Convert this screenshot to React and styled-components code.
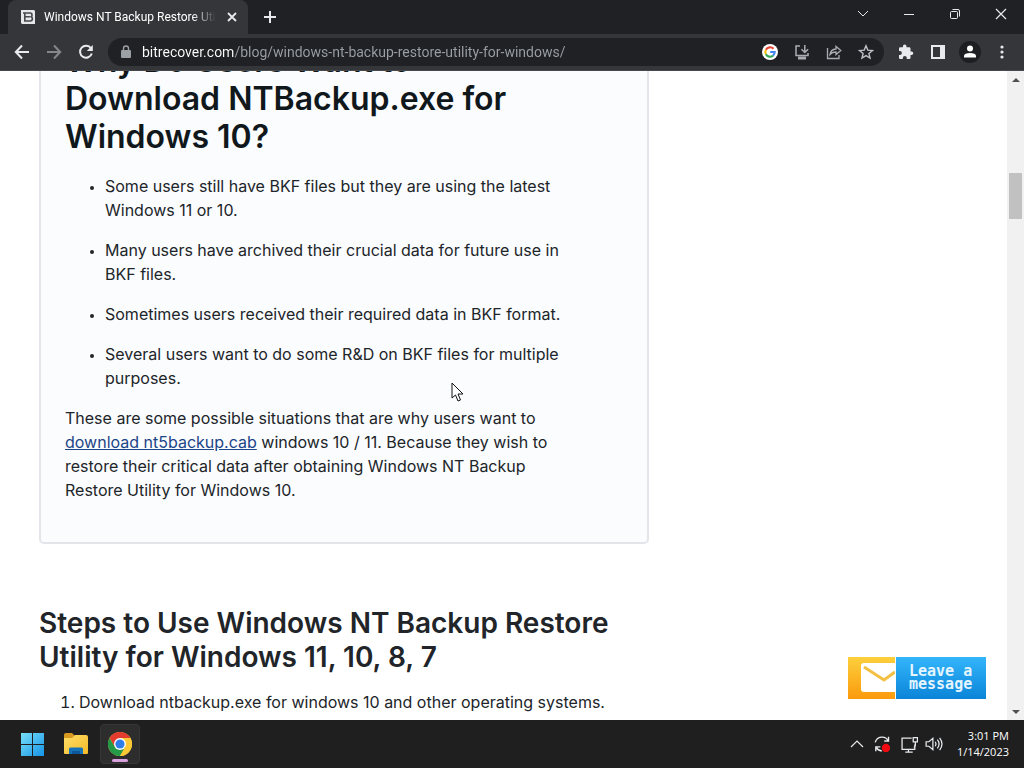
import React from 'react';
import styled, { createGlobalStyle } from 'styled-components';

const ui = 'Roboto, "Open Sans", sans-serif';
const body = 'Inter, "Liberation Sans", sans-serif';

const Global = createGlobalStyle`
  *, *::before, *::after { box-sizing: border-box; }
  body { margin: 0; background: #fff; }
  button, input { font: inherit; color: inherit; border: 0; margin: 0; padding: 0; background: none; }
  svg { display: block; flex: none; }
`;

const Screen = styled.div`
  position: relative;
  display: flex;
  flex-direction: column;
  height: 100vh;
  overflow: hidden;
`;

const TabStrip = styled.div`
  display: flex;
  flex: none;
  height: 34px;
  padding-left: 8px;
  background: #202124;
  color: #fff;
  font-family: ${ui};
`;

const Tab = styled.div`
  display: flex;
  align-items: center;
  gap: 8px;
  width: 240px;
  padding: 0 8px 0 12px;
  border-radius: 8px 8px 0 0;
  background: #35363a;
`;

const TabTitle = styled.span`
  flex: 1;
  overflow: hidden;
  white-space: nowrap;
  font-size: 12px;
  line-height: 16px;
  mask-image: linear-gradient(90deg, #000 86%, transparent);
`;

const IconButton = styled.button`
  display: flex;
  flex: none;
  align-items: center;
  justify-content: center;
  width: ${(p) => p.$w || 32}px;
  height: ${(p) => p.$h || 28}px;
  color: ${(p) => p.$color || '#e8eaed'};
`;

const WindowControls = styled.div`
  display: flex;
  margin-left: auto;
`;

const Toolbar = styled.div`
  display: flex;
  flex: none;
  align-items: center;
  height: 37px;
  padding: 0 6px;
  background: #35363a;
  border-bottom: 1px solid #47484b;
`;

const Omnibox = styled.form`
  display: flex;
  flex: 1;
  align-items: center;
  height: 28px;
  margin: 0 6px;
  padding: 0 2px 0 12px;
  border-radius: 14px;
  background: #202124;
`;

const Address = styled.input`
  flex: 1;
  min-width: 0;
  height: 24px;
  margin-left: 10px;
  font-family: ${ui};
  font-size: 14px;
  outline: none;
  background: linear-gradient(90deg, #fff 92px, #9aa0a6 92px);
  background-clip: text;
  color: transparent;
`;

const Viewport = styled.div`
  position: relative;
  display: flex;
  flex: 1;
  min-height: 0;
  background: #fff;
`;

const Page = styled.main`
  flex: 1;
  min-width: 0;
  overflow: hidden;
  padding-left: 39px;
  color: #212529;
  font-family: ${body};
  font-size: 16px;
  line-height: 24px;
`;

const Article = styled.article`
  max-width: 610px;
  margin-top: -55px;
`;

const Card = styled.section`
  padding: 24px 82px 24px 24px;
  border: 2px solid #e2e6ea;
  border-radius: 5px;
  background: #fafcfe;
`;

const CardTitle = styled.h2`
  margin: 0 0 18px;
  color: #10181c;
  font-size: 32px;
  font-weight: 600;
  line-height: 38px;
`;

const SectionTitle = styled.h3`
  margin: 62px 0 16px;
  font-size: 28px;
  font-weight: 600;
  line-height: 34px;
`;

const Bullets = styled.ul`
  margin: 0 0 16px;
  padding-left: 40px;
  li + li { margin-top: 16px; }
  li::marker { font-size: 12px; }
`;

const Steps = styled.ol`
  margin: 0;
  padding-left: 40px;
`;

const Paragraph = styled.p`
  margin: 0 0 16px;
`;

const Link = styled.a`
  color: #1c4587;
  text-decoration: underline;
`;

const Scrollbar = styled.div`
  display: flex;
  flex-direction: column;
  width: 17px;
  background: #f1f1f1;
`;

const Track = styled.div`
  flex: 1;
  padding: 85px 2px 0;
`;

const Thumb = styled.div`
  height: 46px;
  background: #c1c1c1;
`;

const ChatButton = styled.button`
  position: absolute;
  right: 38px;
  bottom: 21px;
  display: flex;
  height: 42px;
`;

const ChatLabel = styled.span`
  display: flex;
  align-items: center;
  width: 90px;
  height: 42px;
  padding-left: 13px;
  background: linear-gradient(#33b5fb, #0b84d8);
  color: #e4f5ff;
  font-family: "DejaVu Sans Mono", monospace;
  font-size: 15px;
  font-weight: 700;
  line-height: 13px;
  text-align: left;
`;

const Pointer = styled.svg`
  position: absolute;
  left: 451px;
  top: 382px;
`;

const Taskbar = styled.footer`
  display: flex;
  flex: none;
  align-items: center;
  height: 48px;
  padding: 0 15px 0 12px;
  background: #1f1f1f;
  color: #fff;
  font-family: ${ui};
`;

const AppButton = styled.button`
  display: flex;
  flex-direction: column;
  align-items: center;
  justify-content: center;
  width: 40px;
  height: 40px;
  margin-right: 4px;
  border: 1px solid ${(p) => (p.$active ? '#363636' : 'transparent')};
  border-radius: 4px;
  background: ${(p) => (p.$active ? '#2d2d2d' : 'transparent')};
`;

const ActiveMark = styled.span`
  width: 16px;
  height: 3px;
  margin: 3px 0 -6px;
  border-radius: 2px;
  background: #d8a0dc;
`;

const Tray = styled.div`
  display: flex;
  align-items: center;
  margin-left: auto;
`;

const Clock = styled.time`
  width: 64px;
  font-family: "Open Sans", sans-serif;
  font-size: 11px;
  line-height: 16px;
  text-align: right;
`;

const Icon = ({ s = 16, children, ...rest }) => (
  <svg width={s} height={s} viewBox="0 0 16 16" fill="none" stroke="currentColor" strokeWidth="1.5" aria-hidden="true" {...rest}>
    {children}
  </svg>
);

const Favicon = () => (
  <Icon stroke="none">
    <path d="M1 1h13l1 1v13H2l-1-1z" fill="#e4e6e8" />
    <path d="M3 4h7.200q1.800 0 1.800 2 0 1.300-.8 1.800 1.200.6 1.200 2 0 2.200-2.200 2.200H4.800V4M4.800 7.800h5" stroke="#45484c" strokeWidth="1.600" fill="none" />
  </Icon>
);

const GoogleIcon = () => (
  <Icon stroke="none">
    <circle cx="8" cy="8" r="8" fill="#fff" />
    <g fill="none" strokeWidth="2.1">
      <path d="M11.5 4.8A4.7 4.7 0 0 0 3.9 5.8" stroke="#ea4335" />
      <path d="M3.9 5.8a4.7 4.7 0 0 0 0 4.5" stroke="#fbbc04" />
      <path d="M3.9 10.3a4.7 4.7 0 0 0 7.1 1.3" stroke="#34a853" />
      <path d="M11 11.6A4.7 4.7 0 0 0 12.7 8H8.2" stroke="#4285f4" />
    </g>
  </Icon>
);

const WindowsLogo = () => (
  <svg width="24" height="24" viewBox="0 0 24 24" aria-hidden="true">
    <defs>
      <linearGradient id="win" gradientUnits="userSpaceOnUse" x1="0" y1="0" x2="24" y2="24">
        <stop stopColor="#7de3fb" /><stop offset="1" stopColor="#1593e6" />
      </linearGradient>
    </defs>
    <path d="M1 1h11v11H1zM13 1h11v11H13zM1 13h11v11H1zM13 13h11v11H13z" fill="url(#win)" />
  </svg>
);

const FolderIcon = () => (
  <svg width="26" height="24" viewBox="0 0 26 24" aria-hidden="true">
    <defs>
      <linearGradient id="fold" x1="0" y1="0" x2="1" y2="1">
        <stop stopColor="#ffdf68" /><stop offset="1" stopColor="#f5b927" />
      </linearGradient>
    </defs>
    <path d="M1 3q0-2 2-2h6l3 3v5H1z" fill="#d99a20" />
    <path d="M1 6h8l3-3h11q2 0 2 2v16q0 1-1 1H2q-1 0-1-1z" fill="url(#fold)" />
    <path d="M6 22v-5q0-1.500 1.500-1.500h11q1.500 0 1.500 1.500v5z" fill="#1673b8" />
    <path d="M9 19h8v3H9z" fill="#0e579b" />
  </svg>
);

const ChromeIcon = () => (
  <svg width="24" height="24" viewBox="0 0 24 24" aria-hidden="true">
    <circle cx="12" cy="12" r="12" fill="#fcc934" />
    <path d="M1.600 6A12 12 0 0 1 22.400 6H12L6.800 15z" fill="#e33b2e" />
    <path d="M1.600 6A12 12 0 0 0 12 24L17.200 15 12 12 6.800 15z" fill="#249a49" />
    <path d="M22.400 6A12 12 0 0 1 12 24L17.200 15 12 6z" fill="#fcc934" />
    <circle cx="12" cy="12" r="6" fill="#fff" />
    <circle cx="12" cy="12" r="4.600" fill="#2f7de9" />
  </svg>
);

const Envelope = () => (
  <svg width="48" height="42" viewBox="0 0 48 42" aria-hidden="true">
    <defs>
      <linearGradient id="mail" x1="0" y1="0" x2="0" y2="1">
        <stop stopColor="#fcd03c" /><stop offset="1" stopColor="#fb9a0d" />
      </linearGradient>
    </defs>
    <path d="M0 0h47v42H0z" fill="url(#mail)" />
    <path d="M16 6h31v29H16q-3 0-3-3V9q0-3 3-3z" fill="#fff" />
    <path d="M16 10l20 13 11-8" fill="none" stroke="#f3c044" strokeWidth="3" />
    <path d="M47 0h1v42h-1z" fill="#fff" />
  </svg>
);

const points = [
  'Some users still have BKF files but they are using the latest Windows 11 or 10.',
  'Many users have archived their crucial data for future use in BKF files.',
  'Sometimes users received their required data in BKF format.',
  'Several users want to do some R&D on BKF files for multiple purposes.',
];

export default function App() {
  return (
    <Screen>
      <Global />
      <TabStrip>
        <Tab>
          <Favicon />
          <TabTitle>Windows NT Backup Restore Utility</TabTitle>
          <IconButton $w={16} $h={16} aria-label="Close tab">
            <Icon><path d="M4 4l8 8M12 4l-8 8" strokeWidth="1.800" /></Icon>
          </IconButton>
        </Tab>
        <IconButton $w={44} $h={34} aria-label="New tab">
          <Icon><path d="M8 2v12M2 8h12" strokeWidth="2" /></Icon>
        </IconButton>
        <WindowControls>
          <IconButton $w={46} aria-label="Search tabs">
            <Icon><path d="M3 5l5 5 5-5" strokeWidth="1" /></Icon>
          </IconButton>
          <IconButton $w={46} aria-label="Minimize">
            <Icon><path d="M3 8.500h10" strokeWidth="1" /></Icon>
          </IconButton>
          <IconButton $w={46} aria-label="Restore">
            <Icon strokeWidth="1">
              <rect x="3.500" y="5.500" width="7" height="7" rx="1" />
              <path d="M5.500 3.500H11q1.500 0 1.500 1.500v5.500" />
            </Icon>
          </IconButton>
          <IconButton $w={46} aria-label="Close window">
            <Icon><path d="M3 3l10 10M13 3L3 13" strokeWidth="1.200" /></Icon>
          </IconButton>
        </WindowControls>
      </TabStrip>

      <Toolbar>
        <IconButton aria-label="Back">
          <Icon strokeWidth="2"><path d="M15 8H2M8 1.500L1.800 8 8 14.500" /></Icon>
        </IconButton>
        <IconButton $color="#85878b" aria-label="Forward">
          <Icon strokeWidth="2"><path d="M1 8h13M8 1.500L14.200 8 8 14.500" /></Icon>
        </IconButton>
        <IconButton aria-label="Reload">
          <Icon strokeWidth="2">
            <path d="M13 4.300A6 6 0 1 0 13.800 9.500" />
            <path d="M14.800 1v6h-6z" fill="currentColor" stroke="none" />
          </Icon>
        </IconButton>
        <Omnibox onSubmit={(e) => e.preventDefault()}>
          <svg width="12" height="16" viewBox="0 0 12 16" fill="#9aa0a6" aria-hidden="true">
            <path d="M2 6h8q1 0 1 1v6q0 1-1 1H2q-1 0-1-1V7q0-1 1-1z" />
            <path d="M3.500 6V4.500a2.500 2.500 0 0 1 5 0V6" fill="none" stroke="#9aa0a6" strokeWidth="1.400" />
          </svg>
          <Address aria-label="Address" defaultValue="bitrecover.com/blog/windows-nt-backup-restore-utility-for-windows/" />
          <IconButton type="button" aria-label="Search with Google"><GoogleIcon /></IconButton>
          <IconButton type="button" $color="#a9adb2" aria-label="Install app">
            <Icon>
              <path d="M6 2H2v9.500h12V9" />
              <path d="M4 14h8" strokeWidth="3" />
              <path d="M10.800 1v7M7.500 5.200l3.300 3.300 3.300-3.300" />
            </Icon>
          </IconButton>
          <IconButton type="button" $color="#a9adb2" aria-label="Share">
            <Icon strokeWidth="1.300">
              <path d="M1.500 4v10.500h11.500V11" />
              <path d="M4 10.500q.5-5 6-5.500V2.500L14.800 6.500 10 10.500V8Q6 8 4 10.500z" />
            </Icon>
          </IconButton>
          <IconButton type="button" $color="#bdc1c6" aria-label="Bookmark this page">
            <Icon strokeWidth="1.400">
              <path d="M8 1.800l1.800 4.300 4.700.4-3.600 3 1.100 4.600L8 11.600l-4 2.500 1.100-4.600-3.600-3 4.700-.4z" />
            </Icon>
          </IconButton>
        </Omnibox>
        <IconButton aria-label="Extensions">
          <Icon stroke="none" fill="currentColor">
            <path d="M13.500 7.500h-1V4.500q0-1.300-1.300-1.300H8.500V2.400a1.800 1.800 0 0 0-3.600 0v.8H2.200Q1 3.200 1 4.500v2.600h.9a2 2 0 0 1 0 4H1v2.700Q1 15 2.200 15h2.600v-1a2 2 0 0 1 4 0v1h2.400q1.300 0 1.300-1.200v-2.700h1a1.800 1.800 0 0 0 0-3.600z" />
          </Icon>
        </IconButton>
        <IconButton aria-label="Side panel">
          <Icon strokeWidth="2">
            <rect x="2" y="2" width="12" height="12" />
            <path d="M11 2h3v12h-3z" fill="currentColor" />
          </Icon>
        </IconButton>
        <IconButton $color="#fff" aria-label="Profile">
          <svg width="22" height="22" viewBox="0 0 22 22" fill="currentColor" aria-hidden="true">
            <circle cx="11" cy="11" r="11" fill="#1d1e21" />
            <circle cx="11" cy="7.500" r="3" />
            <path d="M5 16.500v-1.700Q5.500 12 11 12t6 2.800v1.700z" />
          </svg>
        </IconButton>
        <IconButton aria-label="Menu">
          <Icon stroke="none" fill="currentColor">
            <circle cx="8" cy="3" r="1.600" /><circle cx="8" cy="8" r="1.600" /><circle cx="8" cy="13" r="1.600" />
          </Icon>
        </IconButton>
      </Toolbar>

      <Viewport>
        <Page>
          <Article>
            <Card>
              <CardTitle>Why Do Users Want to Download NTBackup.exe for Windows 10?</CardTitle>
              <Bullets>
                {points.map((t) => <li key={t}>{t}</li>)}
              </Bullets>
              <Paragraph>
                These are some possible situations that are why users want to{' '}
                <Link href="#download">download nt5backup.cab</Link> windows 10 / 11. Because they wish to
                restore their critical data after obtaining Windows NT Backup Restore Utility for Windows 10.
              </Paragraph>
            </Card>
            <SectionTitle>Steps to Use Windows NT Backup Restore Utility for Windows 11, 10, 8, 7</SectionTitle>
            <Steps>
              <li>Download ntbackup.exe for windows 10 and other operating systems.</li>
            </Steps>
          </Article>
        </Page>
        <Scrollbar>
          <IconButton $w={17} $h={17} $color="#505050" aria-label="Scroll up">
            <Icon stroke="none" fill="currentColor"><path d="M4 10l4-4 4 4z" /></Icon>
          </IconButton>
          <Track><Thumb /></Track>
          <IconButton $w={17} $h={17} $color="#505050" aria-label="Scroll down">
            <Icon stroke="none" fill="currentColor"><path d="M4 6l4 4 4-4z" /></Icon>
          </IconButton>
        </Scrollbar>
        <ChatButton>
          <Envelope />
          <ChatLabel>Leave a message</ChatLabel>
        </ChatButton>
      </Viewport>

      <Taskbar>
        <AppButton aria-label="Start"><WindowsLogo /></AppButton>
        <AppButton aria-label="File Explorer"><FolderIcon /></AppButton>
        <AppButton $active aria-label="Google Chrome">
          <ChromeIcon />
          <ActiveMark />
        </AppButton>
        <Tray>
          <IconButton $w={24} aria-label="Show hidden icons">
            <Icon strokeWidth="1.200"><path d="M2 11l6-6 6 6" /></Icon>
          </IconButton>
          <IconButton $w={26} aria-label="Update status">
            <Icon s={18} strokeWidth="1.200">
              <path d="M2 6.500A6.300 6.300 0 0 1 13.500 5M13.800 1.500V5.300H10M2.500 14.500v-4h4M2.800 10.800q1.500 3 5 3.400" />
              <circle cx="11.500" cy="11.500" r="3.700" fill="#f00a12" stroke="none" />
            </Icon>
          </IconButton>
          <IconButton $w={28} aria-label="Network">
            <Icon s={17} strokeWidth="1.200">
              <path d="M10 2H1v10.500h12V8M7 12.500V15M4 15.200h7M11.500 1.500h4v4h-4zM13.500 5.500V9q0 1.500-1.500 1.500" />
            </Icon>
          </IconButton>
          <IconButton $w={22} aria-label="Volume">
            <Icon s={18} strokeWidth="1.100">
              <path d="M1 6h2.500L7 3v10L3.500 10H1zM9 6q1.500 2 0 4M11 4.200q3 3.800 0 7.600M13 2.500q4.200 5.500 0 11" />
            </Icon>
          </IconButton>
          <Clock dateTime="2023-01-14T15:01">3:01 PM<br />1/14/2023</Clock>
        </Tray>
      </Taskbar>

      <Pointer width="13" height="20" viewBox="0 0 13 20" aria-hidden="true">
        <path d="M1 1v15l3.500-3 2.500 6 2.500-1L7 12h5z" fill="#fff" stroke="#111" />
      </Pointer>
    </Screen>
  );
}
